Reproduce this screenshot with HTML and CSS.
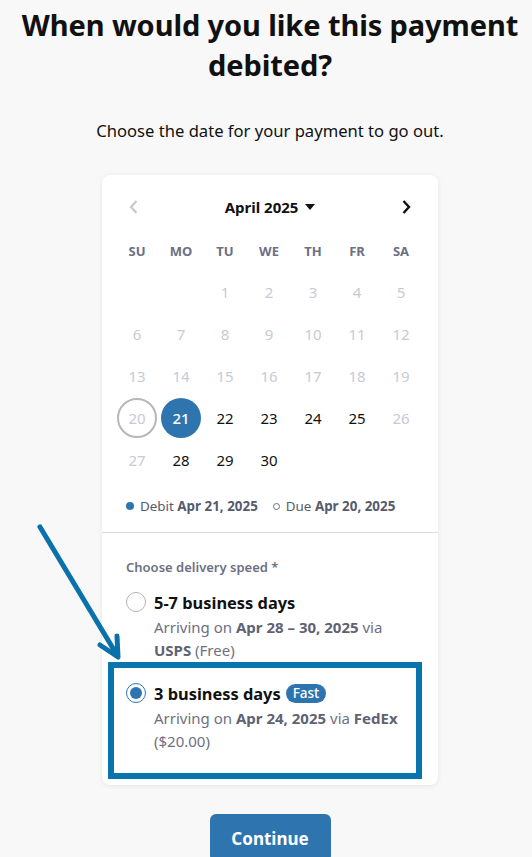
FILE: index.html
```html
<!DOCTYPE html>
<html lang="en">
<head>
<meta charset="utf-8">
<title>Payment date</title>
<link rel="stylesheet" href="styles.css">
</head>
<body>
<main class="page">
  <h1 class="title">When would you like this payment debited?</h1>
  <p class="subtitle">Choose the date for your payment to go out.</p>

  <section class="card">
    <div class="cal">
      <div class="cal-head">
        <button class="nav prev" aria-label="Previous month">
          <svg width="12" height="16" viewBox="0 0 12 16"><path d="M8.5 2 L3 8 L8.5 14" fill="none" stroke="currentColor" stroke-width="2"/></svg>
        </button>
        <div class="month">April 2025 <span class="caret"></span></div>
        <button class="nav next" aria-label="Next month">
          <svg width="12" height="16" viewBox="0 0 12 16"><path d="M3.5 2 L9 8 L3.5 14" fill="none" stroke="currentColor" stroke-width="2.4"/></svg>
        </button>
      </div>
      <div class="grid wk">
        <span>SU</span><span>MO</span><span>TU</span><span>WE</span><span>TH</span><span>FR</span><span>SA</span>
      </div>
      <div class="grid days">
        <span></span><span></span>
        <span class="off">1</span><span class="off">2</span><span class="off">3</span><span class="off">4</span><span class="off">5</span>
        <span class="off">6</span><span class="off">7</span><span class="off">8</span><span class="off">9</span><span class="off">10</span><span class="off">11</span><span class="off">12</span>
        <span class="off">13</span><span class="off">14</span><span class="off">15</span><span class="off">16</span><span class="off">17</span><span class="off">18</span><span class="off">19</span>
        <span class="off"><i class="due">20</i></span><span><i class="sel">21</i></span><span>22</span><span>23</span><span>24</span><span>25</span><span class="off">26</span>
        <span class="off">27</span><span>28</span><span>29</span><span>30</span><span></span><span></span><span></span>
      </div>
      <div class="legend">
        <span class="leg"><i class="dot"></i><span>Debit <b>Apr 21, 2025</b></span></span>
        <span class="leg"><i class="ring"></i><span>Due <b>Apr 20, 2025</b></span></span>
      </div>
    </div>

    <div class="delivery">
      <div class="label">Choose delivery speed *</div>
      <div class="option">
        <span class="radio"></span>
        <div class="opt-body">
          <div class="opt-title">5-7 business days</div>
          <div class="opt-desc">Arriving on <b>Apr 28 – 30, 2025</b> via <b>USPS</b> (Free)</div>
        </div>
      </div>
      <div class="option chosen">
        <span class="radio on"></span>
        <div class="opt-body">
          <div class="opt-title">3 business days <span class="pill">Fast</span></div>
          <div class="opt-desc">Arriving on <b>Apr 24, 2025</b> via <b>FedEx</b> ($20.00)</div>
        </div>
      </div>
    </div>
  </section>

  <div class="actions">
    <button class="cta">Continue</button>
  </div>

  <svg class="arrow" width="140" height="170" viewBox="0 0 140 170">
    <g fill="none" stroke="#0a72ab" stroke-width="5" stroke-linecap="round" stroke-linejoin="round">
      <path d="M40 27 L117 155"/>
      <path d="M100 145 L118 157 L117 136"/>
    </g>
  </svg>
</main>
</body>
</html>
```

FILE: styles.css
```css
* { box-sizing: border-box; }

html, body {
  margin: 0;
  padding: 0;
  background: #f8f8f8;
}

body {
  font-family: "Noto Sans", "Open Sans", "DejaVu Sans", sans-serif;
  color: #111;
  overflow: hidden;
}

.page {
  position: relative;
  width: 532px;
  padding: 0 0 0 8px;
  display: flex;
  flex-direction: column;
  align-items: center;
}

.title {
  margin: 5px 0 0;
  width: 500px;
  text-align: center;
  font-size: 29px;
  line-height: 40px;
  font-weight: 700;
  color: #111;
  letter-spacing: -0.1px;
}

.subtitle {
  margin: 35px 0 0;
  font-size: 16.6px;
  line-height: 22px;
  color: #111;
}

.card {
  margin-top: 33px;
  width: 336px;
  background: #fff;
  border-radius: 8px;
  box-shadow: 0 1px 5px rgba(0, 0, 0, 0.08);
}

.cal {
  padding: 12px 13px 16px;
  border-bottom: 1px solid #dcdcdc;
}

.cal-head {
  height: 40px;
  display: flex;
  align-items: center;
  justify-content: space-between;
}

.nav {
  width: 38px;
  height: 38px;
  padding: 0;
  border: 0;
  background: transparent;
  display: flex;
  align-items: center;
  justify-content: center;
}

.prev { color: #c3c6d0; }
.next { color: #111; }

.month {
  font-size: 15px;
  font-weight: 700;
  display: flex;
  align-items: center;
  gap: 7px;
  color: #111;
}

.caret {
  width: 0;
  height: 0;
  border-left: 5px solid transparent;
  border-right: 5px solid transparent;
  border-top: 6px solid #111;
}

.grid {
  display: grid;
  grid-template-columns: repeat(7, 44px);
}

.wk {
  margin-top: 4px;
  height: 40px;
}

.wk span {
  display: flex;
  align-items: center;
  justify-content: center;
  font-size: 13px;
  font-weight: 700;
  color: #6c7082;
}

.days span {
  height: 42px;
  display: flex;
  align-items: center;
  justify-content: center;
  font-size: 15px;
  color: #111;
}

.days span.off { color: #c7cad6; }

.days i {
  font-style: normal;
  width: 40px;
  height: 40px;
  border-radius: 50%;
  display: flex;
  align-items: center;
  justify-content: center;
}

.days .due {
  border: 2px solid #b8b8b8;
  color: #c7cad6;
}

.days .sel {
  background: #2e75b0;
  color: #fff;
  font-weight: 500;
}

.legend {
  margin-top: 15px;
  height: 20px;
  display: flex;
  align-items: center;
  gap: 15px;
  padding-left: 11px;
  font-size: 13.4px;
  color: #565b6c;
}

.leg {
  display: flex;
  align-items: center;
  gap: 6px;
}

.leg b { font-weight: 700; }

.dot {
  width: 8px;
  height: 8px;
  border-radius: 50%;
  background: #2e75b0;
}

.ring {
  width: 7px;
  height: 7px;
  border-radius: 50%;
  border: 1.8px solid #6c7082;
}

.delivery {
  padding: 24px 24px 6px;
}

.label {
  height: 20px;
  line-height: 20px;
  font-size: 13px;
  font-weight: 600;
  color: #6c7082;
}

.option {
  display: flex;
  gap: 8px;
  margin-top: 13px;
}

.option.chosen {
  margin: 0 -8px 0 -18px;
  padding: 13px 12px 20px 12px;
  border: 6px solid #0a74ad;
}

.radio {
  flex: none;
  width: 20px;
  height: 20px;
  margin-top: 2px;
  border-radius: 50%;
  border: 1.5px solid #b4b4b4;
  display: flex;
  align-items: center;
  justify-content: center;
}

.radio.on { border-color: #2e75b0; }

.radio.on::after {
  content: "";
  width: 12px;
  height: 12px;
  border-radius: 50%;
  background: #2e75b0;
}

.opt-title {
  height: 24px;
  display: flex;
  align-items: center;
  gap: 5px;
  font-size: 16.4px;
  font-weight: 700;
  color: #111;
}

.pill {
  height: 19px;
  padding: 0 7px;
  border-radius: 10px;
  background: #2e75b0;
  color: #fff;
  font-size: 13.5px;
  font-weight: 500;
  display: flex;
  align-items: center;
}

.opt-desc {
  margin-top: 2px;
  font-size: 15px;
  line-height: 23px;
  color: #6e7082;
}

.opt-desc b {
  color: #5f6273;
  font-weight: 700;
}

.actions {
  margin-top: 29px;
}

.cta {
  width: 121px;
  height: 48px;
  border: 0;
  border-radius: 6px;
  background: #2e75b0;
  color: #fff;
  font-family: inherit;
  font-size: 17px;
  font-weight: 700;
}

.arrow {
  position: absolute;
  left: 0;
  top: 500px;
}
```
